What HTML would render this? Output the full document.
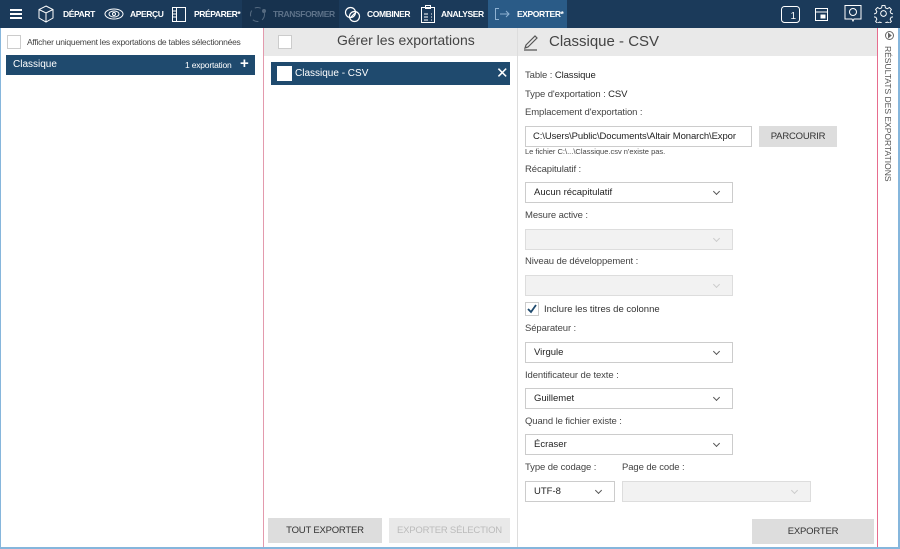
<!DOCTYPE html>
<html><head><meta charset="utf-8"><style>
*{box-sizing:border-box;margin:0;padding:0}
body{width:900px;height:549px;overflow:hidden;font-family:"Liberation Sans",sans-serif;font-size:10px;color:#333;background:#fff;position:relative}
.top{position:absolute;left:0;top:0;width:900px;height:28px;background:#1b3a5a}
.tab{position:absolute;top:0;height:28px;color:#fff;font-weight:bold;font-size:8.5px;line-height:28px;letter-spacing:-.4px}
.ab{position:absolute}
.lbl{position:absolute;left:525px;font-size:9.5px;color:#444;letter-spacing:-.1px}
.sel{position:absolute;left:525px;width:208px;height:21px;border:1px solid #ccc;background:#fff;font-size:9.5px;color:#222;padding-left:8px;line-height:19px}
.sel.dis{background:#f2f2f2;border-color:#ddd}
.sel:after{content:"";position:absolute;right:13px;top:6px;width:4px;height:4px;border-right:1px solid #555;border-bottom:1px solid #555;transform:rotate(45deg)}
.sel.dis:after{border-color:#ccc}
.btn{position:absolute;background:#ddd;color:#333;font-size:9.5px;text-align:center;line-height:25px;letter-spacing:-.2px}
</style></head><body>
<div class="top"></div>
<div class="ab" style="left:242px;top:0;width:97px;height:28px;background:#17324e"></div>
<div class="ab" style="left:488px;top:0;width:79px;height:28px;background:#2a5b87"></div>
<div class="ab" style="left:10px;top:9px;width:12px;height:2px;background:#fff;box-shadow:0 4px 0 #fff,0 8px 0 #fff"></div>
<svg class="ab" style="left:37px;top:5px" width="18" height="18" viewBox="0 0 18 18" fill="none" stroke="#fff" stroke-width="1"><path d="M9 1L16 4.5V13L9 17L2 13V4.5Z M2 4.5L9 8L16 4.5 M9 8V17"/></svg>
<div class="tab" style="left:63px">DÉPART</div>
<svg class="ab" style="left:104px;top:8px" width="20" height="12" viewBox="0 0 20 12" fill="none" stroke="#fff"><ellipse cx="10" cy="6" rx="9" ry="5"/><ellipse cx="10" cy="6" rx="5" ry="3"/><circle cx="10" cy="6" r="1.5"/></svg>
<div class="tab" style="left:130px">APERÇU</div>
<svg class="ab" style="left:172px;top:7px" width="14" height="15" fill="none" stroke="#fff"><rect x="0.5" y="0.5" width="13" height="14"/><path d="M4.5 1V14 M1 4H4 M1 7H4 M1 10H4"/></svg>
<div class="tab" style="left:194px">PRÉPARER*</div>
<svg class="ab" style="left:249px;top:6px" width="17" height="17" fill="none" stroke="#556a80"><circle cx="8.5" cy="8.5" r="7" stroke-dasharray="6 4"/><circle cx="15" cy="5" r="1.5" fill="#556a80"/></svg>
<div class="tab" style="left:273px;color:#5d7289">TRANSFORMER</div>
<svg class="ab" style="left:344px;top:6px" width="17" height="17" fill="none" stroke="#fff" stroke-width="1.2"><circle cx="6.5" cy="6.5" r="5"/><circle cx="10.5" cy="10.5" r="5"/><path d="M7 11L11 7" /></svg>
<div class="tab" style="left:367px">COMBINER</div>
<svg class="ab" style="left:421px;top:5px" width="14" height="18" fill="none" stroke="#fff"><rect x="0.5" y="2.5" width="13" height="15"/><rect x="4.5" y="0.5" width="5" height="3"/><path d="M3 9H7 M3 12H7 M3 15H7 M10 9h1 M10 12h1 M10 15h1"/></svg>
<div class="tab" style="left:441px">ANALYSER</div>
<svg class="ab" style="left:495px;top:8px" width="15" height="12" fill="none" stroke="#8fb2d2"><path d="M4 0.5H0.5V11.5H4 M5 6H14 M11 3L14 6L11 9"/></svg>
<div class="tab" style="left:517px">EXPORTER*</div>
<svg class="ab" style="left:781px;top:6px" width="19" height="17" fill="none" stroke="#fff"><rect x="0.5" y="0.5" width="18" height="16" rx="3"/><text x="9.5" y="13" font-size="10" fill="#fff" stroke="none" font-family="Liberation Sans">1</text></svg>
<svg class="ab" style="left:815px;top:8px" width="13" height="13" fill="none" stroke="#fff"><rect x="0.5" y="0.5" width="12" height="12"/><path d="M0.5 4H12.5"/><rect x="6" y="7" width="4" height="3" fill="#fff"/></svg>
<svg class="ab" style="left:843px;top:4px" width="20" height="20" fill="none" stroke="#fff"><path d="M2 1.5H18V15H11L10 17L9 15H2Z"/><circle cx="10" cy="8" r="3.5"/></svg>
<svg class="ab" style="left:874px;top:4px" width="19" height="19" viewBox="0 0 20 20" fill="none" stroke="#fff"><circle cx="10" cy="10" r="3"/><path d="M8.5 1.5h3l.5 2.5 2 1 2.3-1.3 2 2-1.3 2.3 1 2 2.5.5v3l-2.5.5-1 2 1.3 2.3-2 2-2.3-1.3-2 1-.5 2.5h-3l-.5-2.5-2-1-2.3 1.3-2-2 1.3-2.3-1-2-2.5-.5v-3l2.5-.5 1-2-1.3-2.3 2-2 2.3 1.3 2-1z"/></svg>

<div class="ab" style="left:0;top:28px;width:1px;height:521px;background:#86b6dc"></div>
<div class="ab" style="left:0;top:547px;width:900px;height:2px;background:#86b6dc"></div>
<div class="ab" style="left:898px;top:28px;width:2px;height:521px;background:#86b6dc"></div>
<div class="ab" style="left:263px;top:28px;width:1px;height:519px;background:#e39aad"></div>
<div class="ab" style="left:517px;top:28px;width:1px;height:519px;background:#ddd"></div>
<div class="ab" style="left:877px;top:28px;width:1px;height:519px;background:#e76d8e"></div>

<div class="ab" style="left:7px;top:35px;width:14px;height:14px;border:1px solid #ccc"></div>
<div class="ab" style="left:27px;top:37px;font-size:8.5px;color:#444;letter-spacing:-.25px;white-space:nowrap">Afficher uniquement les exportations de tables sélectionnées</div>
<div class="ab" style="left:6px;top:55px;width:249px;height:20px;background:#1f4a6e;color:#fff;font-size:10px;line-height:20px;padding-left:7px">Classique<span style="position:absolute;left:179px;font-size:8.5px;letter-spacing:-.2px">1 exportation</span><span style="position:absolute;left:234px;font-size:15px;font-weight:bold;top:-1px">+</span></div>

<div class="ab" style="left:264px;top:28px;width:253px;height:28px;background:#e9e9e9"></div>
<div class="ab" style="left:278px;top:35px;width:14px;height:14px;border:1px solid #ccc;background:#fff"></div>
<div class="ab" style="left:337px;top:32px;font-size:14px;color:#444">Gérer les exportations</div>
<div class="ab" style="left:271px;top:62px;width:239px;height:23px;background:#1f4a6e;color:#fff;font-size:10px;line-height:23px;padding-left:24px">Classique - CSV</div>
<div class="ab" style="left:277px;top:66px;width:15px;height:15px;background:#fff"></div>
<div class="ab" style="left:496px;top:64px;color:#fff;font-size:15px">✕</div>
<div class="btn" style="left:268px;top:518px;width:114px">TOUT EXPORTER</div>
<div class="btn" style="left:389px;top:518px;width:121px;background:#e9e9e9;color:#bbb;white-space:nowrap;overflow:hidden">EXPORTER SÉLECTION</div>

<div class="ab" style="left:518px;top:28px;width:359px;height:28px;background:#e9e9e9"></div>
<svg class="ab" style="left:523px;top:33px" width="16" height="18" fill="none" stroke="#555" stroke-width="1.2"><path d="M3 12L12 3L14 5L5 14L2 15Z M1 17H14"/></svg>
<div class="ab" style="left:549px;top:33px;font-size:15px;color:#444">Classique - CSV</div>
<div class="lbl" style="top:70px">Table : <span style="color:#222">Classique</span></div>
<div class="lbl" style="top:89px">Type d'exportation : <span style="color:#222">CSV</span></div>
<div class="lbl" style="top:107px">Emplacement d'exportation :</div>
<div class="ab" style="left:525px;top:126px;width:227px;height:21px;border:1px solid #ccc;font-size:9.5px;line-height:19px;padding-left:7px;overflow:hidden;white-space:nowrap;color:#222;letter-spacing:-.1px">C:\Users\Public\Documents\Altair Monarch\Expor</div>
<div class="btn" style="left:759px;top:126px;width:78px;height:21px;line-height:21px">PARCOURIR</div>
<div class="ab" style="left:525px;top:147px;font-size:7.5px;color:#444">Le fichier C:\...\Classique.csv n'existe pas.</div>
<div class="lbl" style="top:164px">Récapitulatif :</div>
<div class="sel" style="top:182px">Aucun récapitulatif</div>
<div class="lbl" style="top:210px">Mesure active :</div>
<div class="sel dis" style="top:229px"></div>
<div class="lbl" style="top:256px">Niveau de développement :</div>
<div class="sel dis" style="top:275px"></div>
<div class="ab" style="left:525px;top:302px;width:14px;height:14px;border:1px solid #ccc"></div>
<svg class="ab" style="left:526px;top:303px" width="12" height="12" fill="none" stroke="#1f4a6e" stroke-width="1.8"><path d="M2 6L5 9L10 2"/></svg>
<div class="ab" style="left:544px;top:304px;font-size:9.5px;color:#333">Inclure les titres de colonne</div>
<div class="lbl" style="top:323px">Séparateur :</div>
<div class="sel" style="top:342px">Virgule</div>
<div class="lbl" style="top:370px">Identificateur de texte :</div>
<div class="sel" style="top:388px">Guillemet</div>
<div class="lbl" style="top:416px">Quand le fichier existe :</div>
<div class="sel" style="top:434px">Écraser</div>
<div class="lbl" style="top:462px">Type de codage :</div>
<div class="lbl" style="top:462px;left:622px">Page de code :</div>
<div class="sel" style="top:481px;width:90px">UTF-8</div>
<div class="sel dis" style="top:481px;left:622px;width:189px"></div>
<div class="btn" style="left:752px;top:519px;width:122px">EXPORTER</div>

<svg class="ab" style="left:885px;top:31px" width="9" height="9" fill="none" stroke="#666"><circle cx="4.5" cy="4.5" r="4"/><path d="M3.5 2.5L6 4.5L3.5 6.5Z" fill="#666"/></svg>
<div class="ab" style="left:883px;top:46px;writing-mode:vertical-rl;font-size:8.5px;color:#555;letter-spacing:0">RÉSULTATS DES EXPORTATIONS</div>
</body></html>
